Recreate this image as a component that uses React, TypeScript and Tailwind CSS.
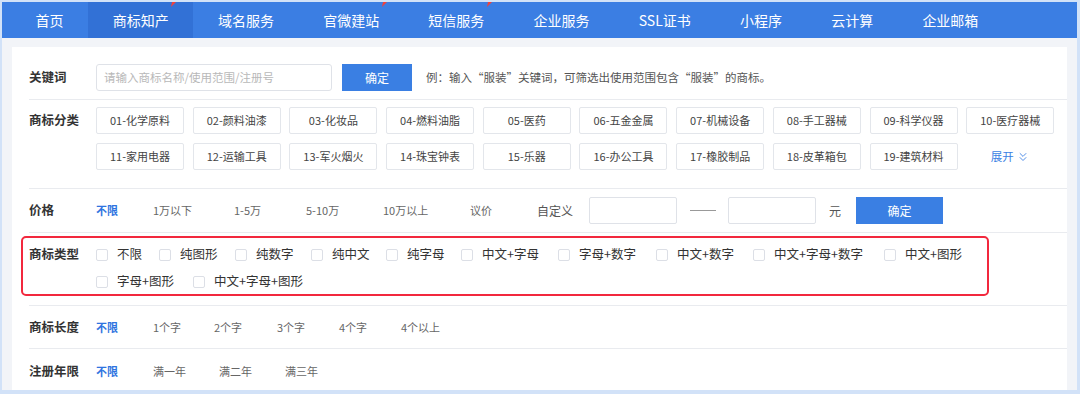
import { ChevronsDown } from "lucide-react";

const navItems = [
  { name: "首页" },
  { name: "商标知产", active: true, hot: true },
  { name: "域名服务" },
  { name: "官微建站", hot: true },
  { name: "短信服务", hot: true },
  { name: "企业服务" },
  { name: "SSL证书" },
  { name: "小程序" },
  { name: "云计算" },
  { name: "企业邮箱" },
];

const categories = [
  "01-化学原料", "02-颜料油漆", "03-化妆品", "04-燃料油脂", "05-医药",
  "06-五金金属", "07-机械设备", "08-手工器械", "09-科学仪器", "10-医疗器械",
  "11-家用电器", "12-运输工具", "13-军火烟火", "14-珠宝钟表", "15-乐器",
  "16-办公工具", "17-橡胶制品", "18-皮革箱包", "19-建筑材料",
];

const types = [
  { name: "不限", w: "w-[63px]" },
  { name: "纯图形", w: "w-[76px]" },
  { name: "纯数字", w: "w-[76px]" },
  { name: "纯中文", w: "w-[75px]" },
  { name: "纯字母", w: "w-[75px]" },
  { name: "中文+字母", w: "w-[97px]" },
  { name: "字母+数字", w: "w-[98px]" },
  { name: "中文+数字", w: "w-[97px]" },
  { name: "中文+字母+数字", w: "w-[131px]" },
  { name: "中文+图形", w: "w-[97px]" },
  { name: "字母+图形", w: "w-[97px]" },
  { name: "中文+字母+图形", w: "w-[131px]" },
];

const lengths = [
  { name: "不限", w: "w-[57px]" },
  { name: "1个字", w: "w-[61px]" },
  { name: "2个字", w: "w-[63px]" },
  { name: "3个字", w: "w-[62px]" },
  { name: "4个字", w: "w-[62px]" },
  { name: "4个以上", w: "w-[62px]" },
];

const years = [
  { name: "不限", w: "w-[57px]" },
  { name: "满一年", w: "w-[66px]" },
  { name: "满二年", w: "w-[66px]" },
  { name: "满三年", w: "w-[66px]" },
];

function Label({ children }: { children: string }) {
  return (
    <div className="w-[67px] shrink-0 text-[12.5px] font-bold text-[#333]">{children}</div>
  );
}

function Option({ name, w, first }: { name: string; w: string; first?: boolean }) {
  return (
    <div
      className={`${w} shrink-0 text-[11px] ${
        first ? "text-[#2f74e0] font-bold" : "text-[#666]"
      }`}
    >
      {name}
    </div>
  );
}

export default function App() {
  return (
    <div className="w-[1080px] h-[394px] overflow-hidden flex flex-col bg-[#f2f4f8] border-t-2 border-l-2 border-r-[3px] border-b-[4px] border-[#d2e2f8] font-['Noto_Sans_CJK_SC',sans-serif]">
      {/* Nav */}
      <nav className="h-[36px] shrink-0 bg-[#3b7ee3] flex pl-[9px]">
        {navItems.map((item) => (
          <div
            key={item.name}
            className={`relative h-full flex items-center px-[24.6px] text-[14px] text-white ${
              item.active ? "bg-[#3271d6]" : ""
            }`}
          >
            {item.name}
            {item.hot && (
              <svg
                className="absolute top-0 right-[17px]"
                width="6"
                height="5"
                viewBox="0 0 6 5"
              >
                <polygon points="2,0 6,0 1,5" fill="#f0413c" />
              </svg>
            )}
          </div>
        ))}
      </nav>

      {/* Card */}
      <div className="flex-1 mt-[9px] mx-[10px] bg-white overflow-hidden">
        {/* 关键词 */}
        <div className="ml-[17px] flex items-center pt-[17px] pb-[8px] border-b border-[#e9ebef]">
          <Label>关键词</Label>
          <div className="w-[236px] h-[27px] border border-[#dfe2e8] rounded-[3px] flex items-center pl-[7px] text-[11.5px] text-[#b8b8b8]">
            请输入商标名称/使用范围/注册号
          </div>
          <button className="ml-[10px] w-[70px] h-[27px] bg-[#3a7fe3] text-white text-[12px]">
            确定
          </button>
          <span className="ml-[14px] text-[11.5px] text-[#555]">
            例：输入“服装”关键词，可筛选出使用范围包含“服装”的商标。
          </span>
        </div>

        {/* 商标分类 */}
        <div className="ml-[17px] flex pt-[7px] pb-[18px] border-b border-[#e9ebef]">
          <div className="h-[27px] flex items-center">
            <Label>商标分类</Label>
          </div>
          <div className="grid grid-cols-[repeat(10,88px)] gap-x-[8.7px] gap-y-[9px]">
            {categories.map((c) => (
              <div
                key={c}
                className="h-[27px] border border-[#e3e6eb] rounded-[2px] flex items-center justify-center text-[11px] text-[#444]"
              >
                {c}
              </div>
            ))}
            <div className="h-[27px] flex items-center justify-center gap-[2px] text-[11.5px] text-[#3a7fe3]">
              展开
              <ChevronsDown size={14} strokeWidth={1.5} />
            </div>
          </div>
        </div>

        {/* 价格 */}
        <div className="ml-[17px] flex items-center py-[8px] border-b border-[#e9ebef]">
          <Label>价格</Label>
          <Option name="不限" w="w-[57px]" first />
          <Option name="1万以下" w="w-[81px]" />
          <Option name="1-5万" w="w-[72px]" />
          <Option name="5-10万" w="w-[77px]" />
          <Option name="10万以上" w="w-[87px]" />
          <Option name="议价" w="w-[67px]" />
          <div className="w-[52px] shrink-0 text-[12px] text-[#555]">自定义</div>
          <div className="w-[88px] h-[27px] border border-[#dfe2e8] rounded-[2px]" />
          <div className="w-[51px] flex justify-center">
            <div className="w-[26px] h-px bg-[#999]" />
          </div>
          <div className="w-[88px] h-[27px] border border-[#dfe2e8] rounded-[2px]" />
          <div className="w-[40px] pl-[13px] text-[12px] text-[#555]">元</div>
          <button className="w-[87px] h-[27px] bg-[#3a7fe3] text-white text-[12px]">
            确定
          </button>
        </div>

        {/* 商标类型 */}
        <div className="relative ml-[17px] flex pt-[8px] pb-[10px] border-b border-[#e9ebef]">
          <div className="h-[27px] flex items-center">
            <Label>商标类型</Label>
          </div>
          <div className="flex-1 flex flex-wrap">
            {types.map((t) => (
              <label key={t.name} className={`${t.w} h-[27px] shrink-0 flex items-center`}>
                <span className="w-[12px] h-[12px] border border-[#dcdfe6] rounded-[2px] bg-white shrink-0" />
                <span className="ml-[9px] text-[12.5px] text-[#333] whitespace-nowrap">{t.name}</span>
              </label>
            ))}
          </div>
          <div className="absolute top-[3px] left-[-8px] w-[968px] h-[60px] border-2 border-[#f2283d] rounded-[5px] pointer-events-none" />
        </div>

        {/* 商标长度 */}
        <div className="ml-[17px] h-[43px] flex items-center border-b border-[#e9ebef]">
          <Label>商标长度</Label>
          {lengths.map((l, i) => (
            <Option key={l.name} name={l.name} w={l.w} first={i === 0} />
          ))}
        </div>

        {/* 注册年限 */}
        <div className="ml-[17px] h-[44px] flex items-center">
          <Label>注册年限</Label>
          {years.map((y, i) => (
            <Option key={y.name} name={y.name} w={y.w} first={i === 0} />
          ))}
        </div>
      </div>
    </div>
  );
}
